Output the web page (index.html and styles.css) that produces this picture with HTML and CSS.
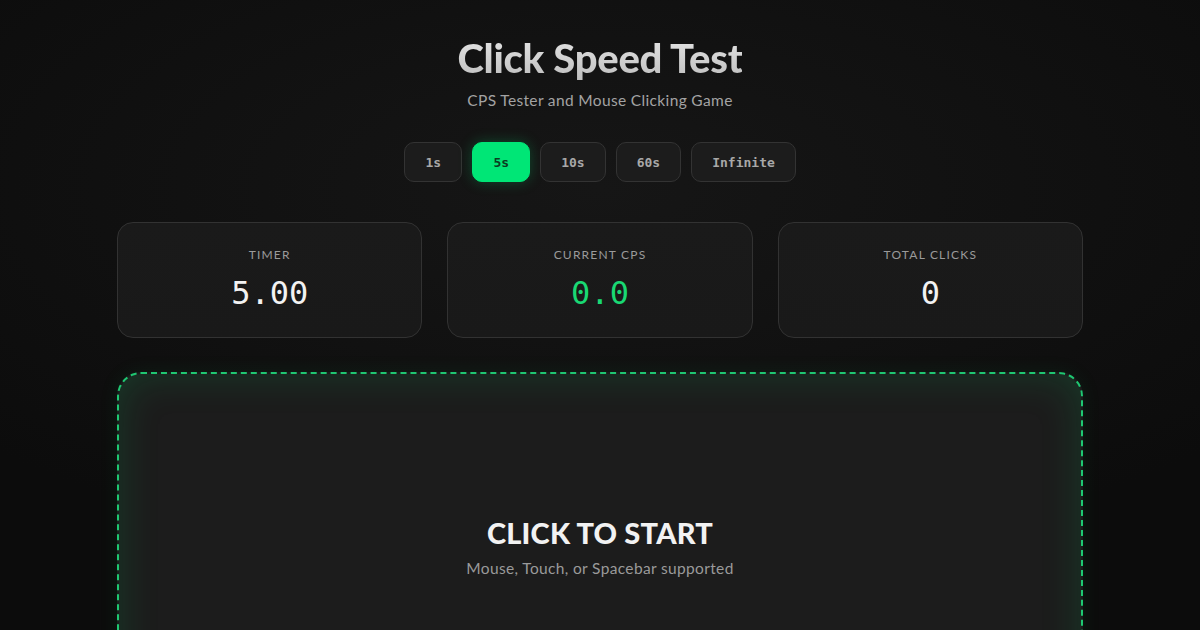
FILE: index.html
```html
<!DOCTYPE html>
<html lang="en">
<head>
<meta charset="utf-8">
<title>Click Speed Test</title>
<link rel="stylesheet" href="styles.css">
</head>
<body>
<main class="page">
  <header class="hero">
    <h1 class="title">Click Speed Test</h1>
    <p class="subtitle">CPS Tester and Mouse Clicking Game</p>
  </header>
  <nav class="modes">
    <button class="mode">1s</button>
    <button class="mode active">5s</button>
    <button class="mode">10s</button>
    <button class="mode">60s</button>
    <button class="mode">Infinite</button>
  </nav>
  <section class="stats">
    <div class="card">
      <div class="label">Timer</div>
      <div class="value">5.00</div>
    </div>
    <div class="card">
      <div class="label">Current CPS</div>
      <div class="value green">0.0</div>
    </div>
    <div class="card">
      <div class="label">Total Clicks</div>
      <div class="value">0</div>
    </div>
  </section>
  <section class="clickzone">
    <div class="cta">CLICK TO START</div>
    <div class="hint">Mouse, Touch, or Spacebar supported</div>
  </section>
</main>
</body>
</html>
```

FILE: styles.css
```css
* { box-sizing: border-box; }
html, body { margin: 0; height: 100%; }
body {
  background: radial-gradient(ellipse 70% 60% at 50% 30%, #161616 0%, #0f0f0f 70%, #0c0c0c 100%);
  background-color: #0e0e0e;
  color: #e8e8e8;
  font-family: "Lato", "Noto Sans", sans-serif;
  overflow: hidden;
}
.page {
  width: 966px;
  margin: 0 auto;
  padding-top: 34px;
  display: flex;
  flex-direction: column;
  align-items: center;
}
.hero { text-align: center; }
.title {
  margin: 0;
  font-size: 40px;
  line-height: 48px;
  font-weight: 900;
  letter-spacing: -0.3px;
  background: linear-gradient(180deg, #e6e6e6 0%, #bdbdbd 100%);
  -webkit-background-clip: text;
  background-clip: text;
  color: transparent;
}
.subtitle {
  margin: 8px 0 0;
  font-size: 15.5px;
  line-height: 20px;
  letter-spacing: 0.35px;
  color: #a3a3a3;
}
.modes {
  margin-top: 32px;
  display: flex;
  gap: 10px;
}
.mode {
  height: 40px;
  min-width: 58px;
  padding: 0 20px;
  border-radius: 10px;
  border: 1px solid #333;
  background: #1c1c1c;
  color: #a8a8a8;
  font-family: "DejaVu Sans Mono", monospace;
  font-weight: bold;
  font-size: 13px;
}
.mode.active {
  background: #00e676;
  border-color: #00e676;
  color: #0b3d1f;
  box-shadow: 0 0 14px rgba(0, 230, 118, 0.25);
}
.stats {
  margin-top: 40px;
  width: 100%;
  display: grid;
  grid-template-columns: repeat(3, 1fr);
  gap: 25px;
}
.card {
  height: 116px;
  border-radius: 16px;
  border: 1px solid #323232;
  background: linear-gradient(180deg, #1a1a1a 0%, #191919 100%);
  display: flex;
  flex-direction: column;
  align-items: center;
  padding-top: 24px;
}
.label {
  font-size: 12px;
  line-height: 16px;
  letter-spacing: 1.2px;
  text-transform: uppercase;
  color: #9a9a9a;
}
.value {
  margin-top: 11px;
  font-family: "DejaVu Sans Mono", monospace;
  font-size: 32px;
  line-height: 38px;
  color: #f2f2f2;
}
.value.green { color: #19d873; }
.clickzone {
  margin-top: 34px;
  width: 100%;
  height: 356px;
  border: 2px dashed #1fc772;
  border-radius: 24px;
  background: #1c1c1c;
  box-shadow: inset 0 0 40px rgba(0, 200, 100, 0.18), 0 0 20px rgba(0, 200, 100, 0.08);
  display: flex;
  flex-direction: column;
  align-items: center;
  justify-content: center;
}
.cta {
  margin-top: -6px;
  font-size: 29px;
  line-height: 34px;
  font-weight: 900;
  color: #f2f2f2;
  letter-spacing: 0.2px;
}
.hint {
  margin-top: 8px;
  font-size: 15.5px;
  line-height: 20px;
  letter-spacing: 0.35px;
  color: #9a9a9a;
}
```
